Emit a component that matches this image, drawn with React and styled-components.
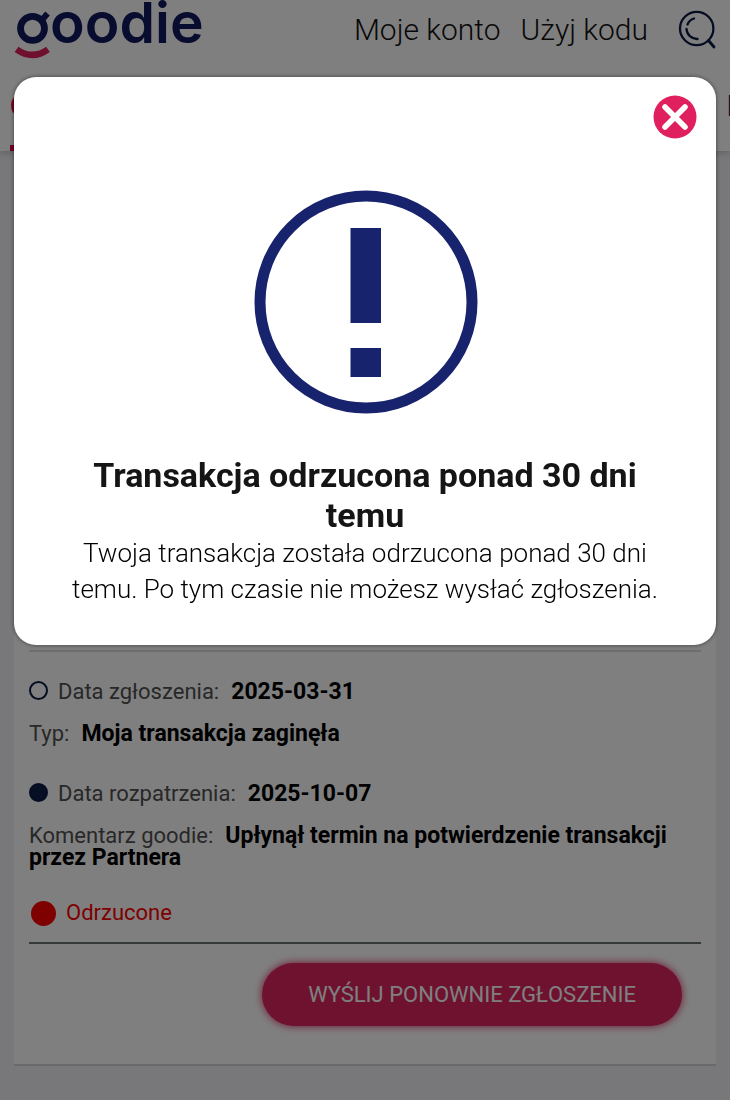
import React, { useState } from 'react';
import styled, { createGlobalStyle } from 'styled-components';

const GlobalStyle = createGlobalStyle`
  *, *::before, *::after {
    box-sizing: border-box;
  }
  body {
    margin: 0;
    background: #f1f1f6;
    color: #000;
    font-family: Roboto, "Noto Sans", sans-serif;
  }
`;

const Page = styled.div`
  min-height: 100vh;
  overflow: hidden;
`;

const Header = styled.header`
  background: #fff;
  box-shadow: 0 1px 8px rgba(0, 0, 0, 0.25);
`;

const TopBar = styled.div`
  display: flex;
  justify-content: space-between;
  height: 78px;
  padding: 0 13px 0 14px;
`;

const Logo = styled.a`
  display: flex;
  align-items: flex-start;
  color: #10195c;
  text-decoration: none;
`;

const LogoName = styled.span`
  font-family: Inter, sans-serif;
  font-size: 57px;
  font-weight: 600;
  line-height: 46px;
`;

const LogoMark = styled.svg`
  width: 36px;
  height: 60px;
`;

const Menu = styled.nav`
  display: flex;
  gap: 20px;
  height: 58px;
  align-items: center;
`;

const MenuLink = styled.a`
  color: #111;
  font-size: 30px;
  font-weight: 300;
  text-decoration: none;
`;

const SearchButton = styled.button`
  width: 40px;
  height: 40px;
  margin-left: 9px;
  padding: 0;
  border: none;
  background: none;
  cursor: pointer;
`;

const Tabs = styled.nav`
  display: grid;
  grid-template-columns: 1fr 3px;
  height: 73px;
  padding-left: 10px;
  overflow: hidden;
`;

const Tab = styled.a`
  justify-self: start;
  padding-top: 10px;
  border-bottom: 6px solid ${({ $active }) => ($active ? '#e0004d' : 'transparent')};
  color: ${({ $active }) => ($active ? '#e0004d' : '#10195c')};
  font-size: 30px;
  font-weight: 700;
  line-height: 36px;
  text-decoration: none;
`;

const Card = styled.main`
  margin: 14px 14px 35px;
  padding: 0 15px 38px;
  background: #fff;
  border-bottom: 2px solid #d2d2d2;
`;

const Summary = styled.section`
  height: 487px;
  border-bottom: 2px solid #dcdcdc;
`;

const History = styled.dl`
  margin: 0;
  padding-top: 29px;
  font-size: 22px;
  line-height: 22px;
`;

const Entry = styled.div`
  margin-bottom: ${({ $last }) => ($last ? '38px' : '20px')};
`;

const Dot = styled.span`
  display: inline-block;
  width: 19px;
  height: 19px;
  margin-right: 10px;
  border: 2px solid #0c1a45;
  border-radius: 50%;
  background: ${({ $filled }) => ($filled ? '#0e1e48' : 'transparent')};
  vertical-align: -1px;
`;

const Label = styled.dt`
  display: inline;
  margin-right: 12px;
  color: #505050;
`;

const Value = styled.dd`
  display: inline;
  margin: 0;
  font-size: 23px;
  font-weight: 700;
`;

const Status = styled.div`
  display: flex;
  align-items: center;
  gap: 10px;
  padding: 0 2px 16px;
  margin-top: -7px;
  border-bottom: 2px solid #6c7272;
  color: #ff0000;
  font-size: 22px;
  line-height: 26px;

  &::before {
    content: '';
    width: 25px;
    height: 25px;
    border-radius: 50%;
    background: currentColor;
  }
`;

const Actions = styled.div`
  display: flex;
  justify-content: flex-end;
  padding: 19px 19px 0;
`;

const ResendButton = styled.button`
  height: 63px;
  padding: 0 46px;
  border: none;
  border-radius: 32px;
  background: #dc2560;
  box-shadow: 0 0 8px #dc2560;
  color: #fff;
  font-family: inherit;
  font-size: 22px;
  font-weight: 400;
  text-transform: uppercase;
  cursor: pointer;
`;

const Overlay = styled.div`
  position: fixed;
  inset: 0;
  padding: 77px 14px;
  background: rgba(0, 0, 0, 0.5);
`;

const Modal = styled.section`
  position: relative;
  padding: 113px 52px 38px;
  border-radius: 22px;
  background: #fff;
  box-shadow: 0 0 4px rgba(0, 0, 0, 0.5);
  text-align: center;
`;

const CloseButton = styled.button`
  position: absolute;
  top: 18px;
  right: 19px;
  width: 44px;
  height: 44px;
  padding: 0;
  border: none;
  background: none;
  cursor: pointer;
`;

const AlertIcon = styled.svg`
  display: block;
  width: 226px;
  height: 226px;
  margin: 0 auto 39px;
`;

const Title = styled.h1`
  margin: 0;
  color: #151515;
  font-size: 34px;
  font-weight: 700;
  line-height: 40px;
`;

const Message = styled.p`
  margin: 0;
  font-size: 26px;
  font-weight: 300;
  line-height: 36px;
`;

const App = () => {
  const [open, setOpen] = useState(true);

  return (
    <Page>
      <GlobalStyle />
      <Header>
        <TopBar>
          <Logo href="#" aria-label="goodie">
            <LogoMark viewBox="0 0 36 60" fill="none" aria-hidden="true">
              <circle cx="18.500" cy="28.300" r="12" stroke="#10195c" strokeWidth="6.800" />
              <line x1="28" y1="20" x2="33.500" y2="13.500" stroke="#10195c" strokeWidth="6" />
              <path d="M2.500 49.300 Q18.500 60.500 34 49.300" stroke="#e0205e" strokeWidth="6.500" />
            </LogoMark>
            <LogoName>oodie</LogoName>
          </Logo>
          <Menu>
            <MenuLink href="#">Moje konto</MenuLink>
            <MenuLink href="#">Użyj kodu</MenuLink>
            <SearchButton type="button" aria-label="Szukaj">
              <svg width="40" height="40" viewBox="0 0 40 40" fill="none" stroke="#0c1a45" strokeWidth="2.300" strokeLinecap="round">
                <circle cx="19.700" cy="19.500" r="16.700" />
                <path d="M31.500 31.500 L37 38" strokeWidth="2.800" />
                <path d="M10.500 15.500 A10.500 10.500 0 0 1 17 9.500" />
                <path d="M9.500 19.800 A10.500 10.500 0 0 0 20.500 30" />
              </svg>
            </SearchButton>
          </Menu>
        </TopBar>
        <Tabs>
          <Tab href="#" $active>O</Tab>
          <Tab href="#">P</Tab>
        </Tabs>
      </Header>

      <Card>
        <Summary />
        <History>
          <Entry>
            <Dot />
            <Label>Data zgłoszenia:</Label>
            <Value>2025-03-31</Value>
          </Entry>
          <Entry $last>
            <Label>Typ:</Label>
            <Value>Moja transakcja zaginęła</Value>
          </Entry>
          <Entry>
            <Dot $filled />
            <Label>Data rozpatrzenia:</Label>
            <Value>2025-10-07</Value>
          </Entry>
          <Entry $last>
            <Label>Komentarz goodie:</Label>
            <Value>Upłynął termin na potwierdzenie transakcji przez Partnera</Value>
          </Entry>
        </History>
        <Status>Odrzucone</Status>
        <Actions>
          <ResendButton type="button">Wyślij ponownie zgłoszenie</ResendButton>
        </Actions>
      </Card>

      {open && (
        <Overlay>
          <Modal role="dialog" aria-modal="true" aria-labelledby="modal-title">
            <CloseButton type="button" aria-label="Zamknij" onClick={() => setOpen(false)}>
              <svg width="44" height="44" viewBox="0 0 44 44">
                <circle cx="22" cy="22" r="21.500" fill="#e0205e" />
                <path d="M12 12 L32 32 M32 12 L12 32" stroke="#fff" strokeWidth="5.500" strokeLinecap="round" />
              </svg>
            </CloseButton>
            <AlertIcon viewBox="0 0 226 226" aria-hidden="true">
              <circle cx="114" cy="112" r="106" fill="none" stroke="#18236d" strokeWidth="11" />
              <rect x="98.500" y="38" width="30.500" height="95" fill="#18236d" />
              <rect x="98.500" y="158" width="30.500" height="29" fill="#18236d" />
            </AlertIcon>
            <Title id="modal-title">Transakcja odrzucona ponad 30 dni temu</Title>
            <Message>
              Twoja transakcja została odrzucona ponad 30 dni temu. Po tym czasie nie możesz wysłać zgłoszenia.
            </Message>
          </Modal>
        </Overlay>
      )}
    </Page>
  );
};

export default App;
